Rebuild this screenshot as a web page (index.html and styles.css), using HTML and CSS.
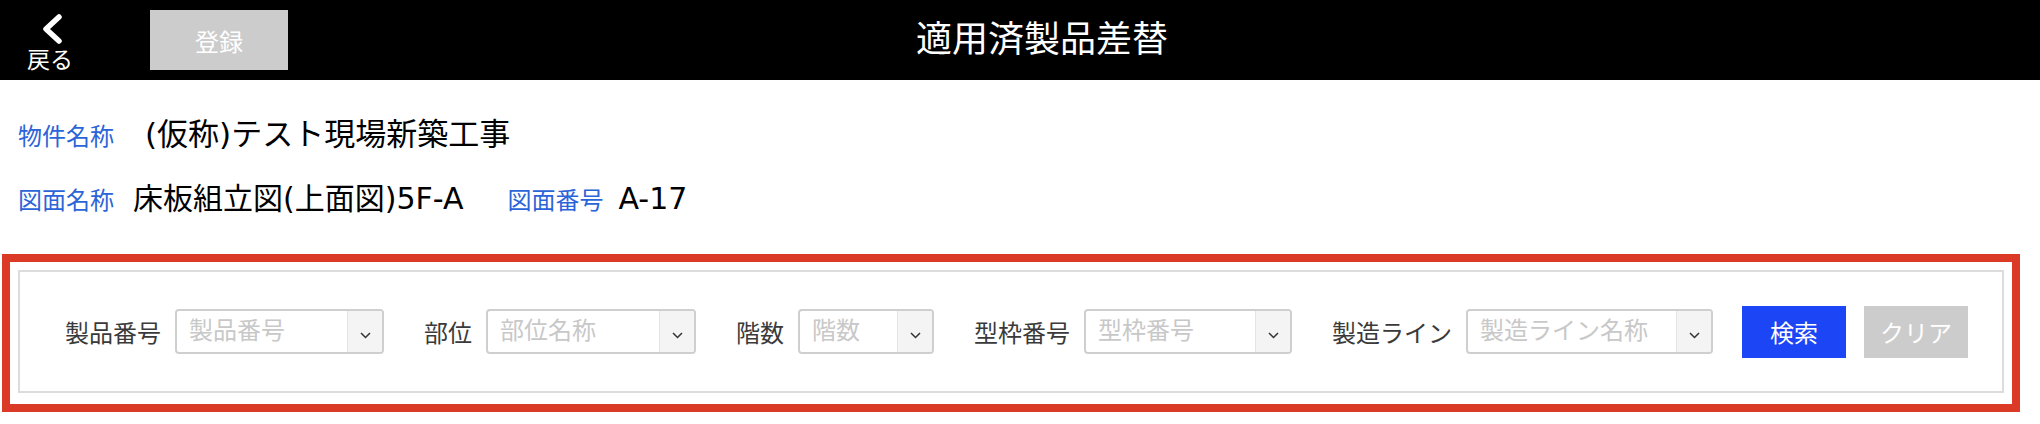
FILE: index.html
```html
<!DOCTYPE html>
<html lang="ja">
<head>
<meta charset="utf-8">
<title>適用済製品差替</title>
<link rel="stylesheet" href="styles.css">
</head>
<body>
<header class="header">
  <div class="header-left">
    <div class="back">
      <svg class="back-icon" width="22" height="30" viewBox="0 0 22 30"><polyline points="18,3 5,15 18,27" fill="none" stroke="#fff" stroke-width="5.5" stroke-linecap="round" stroke-linejoin="round"/></svg>
      <span class="back-text">戻る</span>
    </div>
    <div class="btn-register">登録</div>
  </div>
  <h1 class="title">適用済製品差替</h1>
</header>

<section class="info">
  <div class="info-row">
    <span class="lbl lbl-first">物件名称</span><span class="val val-lg">(仮称)テスト現場新築工事</span>
  </div>
  <div class="info-row">
    <span class="lbl">図面名称</span><span class="val">床板組立図(上面図)5F-A</span>
    <span class="lbl lbl-sub">図面番号</span><span class="val">A-17</span>
  </div>
</section>

<section class="highlight">
  <div class="filter">
    <div class="field">
      <span class="f-label">製品番号</span>
      <div class="select w-209"><span class="ph">製品番号</span><span class="arrow"><svg width="11" height="7" viewBox="0 0 11 7"><polyline points="1,1 5.5,5.5 10,1" fill="none" stroke="#333" stroke-width="1.5"/></svg></span></div>
    </div>
    <div class="field">
      <span class="f-label">部位</span>
      <div class="select w-210"><span class="ph">部位名称</span><span class="arrow"><svg width="11" height="7" viewBox="0 0 11 7"><polyline points="1,1 5.5,5.5 10,1" fill="none" stroke="#333" stroke-width="1.5"/></svg></span></div>
    </div>
    <div class="field">
      <span class="f-label">階数</span>
      <div class="select w-136"><span class="ph">階数</span><span class="arrow"><svg width="11" height="7" viewBox="0 0 11 7"><polyline points="1,1 5.5,5.5 10,1" fill="none" stroke="#333" stroke-width="1.5"/></svg></span></div>
    </div>
    <div class="field">
      <span class="f-label">型枠番号</span>
      <div class="select w-208"><span class="ph">型枠番号</span><span class="arrow"><svg width="11" height="7" viewBox="0 0 11 7"><polyline points="1,1 5.5,5.5 10,1" fill="none" stroke="#333" stroke-width="1.5"/></svg></span></div>
    </div>
    <div class="field field-last">
      <span class="f-label">製造ライン</span>
      <div class="select w-247"><span class="ph">製造ライン名称</span><span class="arrow"><svg width="11" height="7" viewBox="0 0 11 7"><polyline points="1,1 5.5,5.5 10,1" fill="none" stroke="#333" stroke-width="1.5"/></svg></span></div>
    </div>
    <div class="actions">
      <button class="btn btn-search">検索</button>
      <button class="btn btn-clear">クリア</button>
    </div>
  </div>
</section>
</body>
</html>
```

FILE: styles.css
```css
* { box-sizing: border-box; }
html, body { margin: 0; padding: 0; background: #fff; }
body {
  font-family: "Liberation Sans", "Noto Sans CJK JP", sans-serif;
  color: #000;
}

/* header */
.header {
  height: 80px;
  background: #000;
  display: flex;
  align-items: center;
}
.header-left {
  display: flex;
  align-items: center;
  padding-left: 27px;
}
.back {
  width: 46px;
  display: flex;
  flex-direction: column;
  align-items: center;
  color: #fff;
}
.back-icon { display: block; margin-top: 6px; margin-left: 4px; }
.back-text {
  font-size: 23px;
  line-height: 26px;
  margin-top: 3px;
}
.btn-register {
  margin-left: 77px;
  width: 138px;
  height: 60px;
  background: #cccccc;
  color: #fff;
  font-size: 24px;
  display: flex;
  align-items: center;
  justify-content: center;
}
.title {
  flex: 1;
  margin: 0;
  padding-right: 244px;
  text-align: center;
  color: #fff;
  font-size: 36px;
  font-weight: normal;
  line-height: 40px;
}

/* info */
.info {
  padding: 34px 0 0 18px;
  display: flex;
  flex-direction: column;
  gap: 25px;
}
.info-row {
  display: flex;
  align-items: baseline;
  height: 40px;
  line-height: 40px;
}
.lbl {
  font-size: 24px;
  color: #2b64d8;
  margin-right: 19px;
}
.lbl-first { margin-right: 31px; }
.lbl-sub { margin-left: 44px; margin-right: 15px; }
.val {
  font-family: "DejaVu Sans", "Noto Sans CJK JP", sans-serif;
  font-size: 30px;
  color: #000;
}
.val-lg { font-size: 31px; }

/* highlight + filter */
.highlight {
  margin: 35px 20px 0 2px;
  border: 8px solid #db3b26;
  padding: 8px 8px 11px 8px;
}
.filter {
  height: 123px;
  border: 2px solid #dcdcdc;
  display: flex;
  align-items: center;
  padding-left: 45px;
}
.field {
  display: flex;
  align-items: center;
  gap: 14px;
  margin-right: 40px;
}
.field-last { margin-right: 29px; }
.f-label {
  font-size: 24px;
  color: #3a3a3a;
  white-space: nowrap;
}
.select {
  height: 45px;
  border: 2px solid #cfcfcf;
  border-radius: 4px;
  display: flex;
  overflow: hidden;
  background: #fff;
}
.w-209 { width: 209px; }
.w-210 { width: 210px; }
.w-136 { width: 136px; }
.w-208 { width: 208px; }
.w-247 { width: 247px; }
.ph {
  flex: 1;
  padding-left: 12px;
  font-size: 24px;
  line-height: 40px;
  color: #c8c8c8;
  white-space: nowrap;
}
.arrow {
  width: 35px;
  background: #f4f4f4;
  border-left: 1px solid #e4e4e4;
  display: flex;
  align-items: center;
  justify-content: center;
  padding-top: 7px;
}
.arrow svg { display: block; }
.actions {
  display: flex;
  gap: 18px;
}
.btn {
  width: 104px;
  height: 52px;
  border: none;
  border-radius: 0;
  font-family: inherit;
  font-size: 24px;
  color: #fff;
  padding: 0;
}
.btn-search { background: #1c45f5; }
.btn-clear { background: #cccccc; }
```
